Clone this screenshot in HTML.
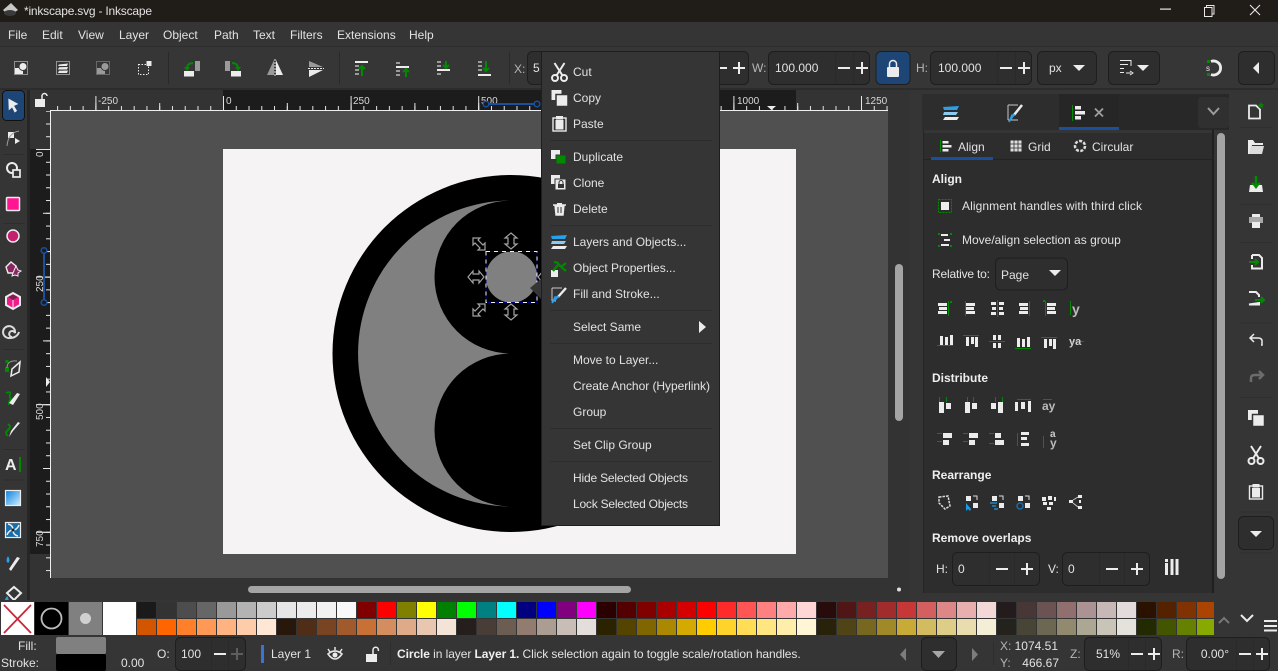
<!DOCTYPE html>
<html><head><meta charset="utf-8"><title>Inkscape</title>
<style>
html,body{margin:0;padding:0;background:#353535;width:1278px;height:671px;overflow:hidden}
svg{display:block}
text{font-family:"Liberation Sans",sans-serif;font-size:12px;fill:#e2e2e2}
.b{font-weight:bold;fill:#efefef}
.m{fill:#dfdfdf}
.r{font-size:10px;fill:#d8d8d8}
.w{fill:#ececec}
.g{fill:#008a00}
.s{stroke:#ececec;fill:none;stroke-width:1.5}
.box{fill:#2e2e2e;stroke:#1e1e1e;stroke-width:1}
.pm{stroke:#ececec;stroke-width:2;fill:none}
.sep{stroke:#2a2a2a;stroke-width:1}
.h{fill:none;stroke:#a0a0a0;stroke-width:1}
</style></head><body>
<svg width="1278" height="671" viewBox="0 0 1278 671" xmlns="http://www.w3.org/2000/svg" shape-rendering="geometricPrecision">
<defs>
<pattern id="tm" patternUnits="userSpaceOnUse" x="223" y="90" width="12.76" height="21"><rect x="0" y="16" width="1" height="4" fill="#e6e6e6"/></pattern>
<pattern id="tm5" patternUnits="userSpaceOnUse" x="223" y="90" width="63.8" height="21"><rect x="0" y="13" width="1" height="7" fill="#e6e6e6"/></pattern>
<pattern id="tM" patternUnits="userSpaceOnUse" x="223" y="90" width="127.6" height="21"><rect x="0" y="6" width="1" height="14" fill="#e6e6e6"/></pattern>
<pattern id="lm" patternUnits="userSpaceOnUse" x="30" y="149" width="21" height="12.76"><rect x="16" y="0" width="4" height="1" fill="#e6e6e6"/></pattern>
<pattern id="lm5" patternUnits="userSpaceOnUse" x="30" y="149" width="21" height="63.8"><rect x="13" y="0" width="7" height="1" fill="#e6e6e6"/></pattern>
<pattern id="lM" patternUnits="userSpaceOnUse" x="30" y="149" width="21" height="127.6"><rect x="6" y="0" width="14" height="1" fill="#e6e6e6"/></pattern>
<linearGradient id="gr" x1="0" y1="0" x2="1" y2="1"><stop offset="0" stop-color="#0a80e0"/><stop offset="1" stop-color="#d2f0ff"/></linearGradient>
<g id="layers"><path d="M-8 -6 L8 -7 L6 -3 L-7 -3Z" fill="#2aa0e8"/><path d="M-7 -1 L7 -1 L5 2 L-8 2Z" fill="#8ccbf0"/><path d="M-6 4 L8 4 L6 7 L-8 7Z" fill="#ececec"/></g>
<g id="cut"><circle cx="-4.5" cy="6" r="3" fill="none" stroke="#ececec" stroke-width="2"/><circle cx="4.5" cy="6" r="3" fill="none" stroke="#ececec" stroke-width="2"/><path d="M-3 3.5 L5 -9 M3 3.5 L-5 -9" stroke="#ececec" stroke-width="2" fill="none"/></g>
<g id="copy"><rect x="-8" y="-8" width="10" height="10" fill="#ececec"/><rect x="-3.5" y="-3.5" width="12" height="12" fill="#ececec" stroke="#353535" stroke-width="1.5"/></g>
<g id="paste"><rect x="-6.5" y="-6" width="13" height="13" fill="none" stroke="#ececec" stroke-width="1.4"/><rect x="-3.5" y="-8" width="7" height="3.5" fill="#ececec"/><rect x="-4" y="-4" width="8" height="9.5" fill="#ececec"/></g>
<g id="arr"><path d="M0 -8 L6 -3 L3 -3 L3 3 L6 3 L0 8 L-6 3 L-3 3 L-3 -3 L-6 -3Z" fill="#000" stroke="#a3a3a3" stroke-width="1.200"/></g>
<g id="darr"><path d="M-6 -6 L1 -6 L-1 -4 L4 1 L6 -1 L6 6 L-1 6 L1 4 L-4 -1 L-6 1Z" fill="#000" stroke="#a3a3a3" stroke-width="1.200"/></g>
</defs>

<!-- base -->
<rect width="1278" height="671" fill="#353535"/>
<!-- title bar -->
<rect width="1278" height="22" fill="#201c18"/>
<path d="M11 3 L18 10 L15 12 L14 11 L12 14 L9 14 L7 11 L5 12 L3 10Z" fill="#c8c8c8"/><ellipse cx="10" cy="13" rx="6" ry="3" fill="#3a3a3a"/>
<text x="24" y="15" style="font-size:12px" textLength="128">*inkscape.svg - Inkscape</text>
<rect x="1160" y="8.5" width="11" height="1.2" fill="#e8e8e8"/>
<path d="M1204.5 7.5h7.5v9h-7.5z M1206.5 7.5v-2h7.5v8.5h-2" fill="none" stroke="#e8e8e8" stroke-width="1"/>
<path d="M1250 5 L1260 15 M1260 5 L1250 15" stroke="#e8e8e8" stroke-width="1.1"/>

<!-- menu bar -->
<rect y="22" width="1278" height="25" fill="#353535"/>
<rect y="46" width="1278" height="1" fill="#2e2e2e"/>
<g style="font-size:12px">
<text x="8" y="39">File</text><text x="42" y="39">Edit</text><text x="78" y="39">View</text><text x="119" y="39">Layer</text><text x="163" y="39">Object</text><text x="214" y="39">Path</text><text x="253" y="39">Text</text><text x="290" y="39">Filters</text><text x="337" y="39">Extensions</text><text x="409" y="39">Help</text>
</g>

<!-- tool bar -->
<rect y="47" width="1278" height="43" fill="#363636"/>
<rect y="88" width="1278" height="2" fill="#2c2c2c"/>
<!-- select all -->
<g transform="translate(21,68)"><rect x="-6.5" y="-6.5" width="13" height="13" fill="none" stroke="#ececec" stroke-dasharray="1 1"/><rect x="-6" y="0" width="8" height="6" class="w"/><circle cx="2" cy="-1.500" r="4" class="w" stroke="#363636"/></g>
<g transform="translate(63,68)"><rect x="-6.5" y="-6.5" width="13" height="13" fill="none" stroke="#ececec" stroke-dasharray="1 1"/><path d="M-4 -3.500 L5 -4.500 L4 -2 L-5 -2Z M-4 -.8 L5 -1 L4 1.500 L-5 1.500Z M-4 2.800 L5 2.500 L4 5 L-5 5Z" class="w"/></g>
<g transform="translate(103,68)" opacity=".55"><rect x="-6.5" y="-6.5" width="13" height="13" fill="none" stroke="#ececec" stroke-dasharray="1 1"/><rect x="-6" y="0" width="8" height="6" class="w"/><circle cx="2" cy="-1.500" r="4" class="w" stroke="#363636"/></g>
<g transform="translate(145,68)"><rect x="-6.500" y="-3.500" width="10" height="10" fill="none" stroke="#ececec" stroke-dasharray="1.500 1.500"/><rect x="1.500" y="-7" width="5" height="5" class="w"/></g>
<!-- rotate -->
<rect x="195" y="61" width="5" height="10" fill="#9a9a9a"/><rect x="184" y="71" width="10" height="5.500" class="w"/><path d="M193 63 Q187 63 187 69" stroke="#008a00" stroke-width="2" fill="none"/><path d="M184 67 L190 67 L187 71Z" class="g"/>
<rect x="225" y="61" width="5" height="10" fill="#9a9a9a"/><rect x="231" y="71" width="10" height="5.500" class="w"/><path d="M232 63 Q238 63 238 69" stroke="#008a00" stroke-width="2" fill="none"/><path d="M235 67 L241 67 L238 71Z" class="g"/>
<!-- flip -->
<path d="M267 75 L274 60 V75Z" fill="#9a9a9a"/><path d="M276 60 L283 75 H276Z" class="w"/><path d="M275 59 V77" stroke="#ececec" stroke-dasharray="2 1"/>
<path d="M309 61 L323 67 H309Z" fill="#9a9a9a"/><path d="M309 70 L323 70 L309 77Z" class="w"/><path d="M308 68.500 H324" stroke="#ececec" stroke-dasharray="2 1"/>
<!-- raise/lower -->
<g transform="translate(355,61)"><rect width="13" height="2" class="w"/><rect y="4" width="4" height="2" fill="#9a9a9a"/><rect y="8" width="4" height="2" fill="#9a9a9a"/><rect y="12" width="4" height="2" fill="#9a9a9a"/><path d="M7 15 V7 M4 8 L7 5 L10 8" stroke="#008a00" stroke-width="2" fill="none"/></g>
<g transform="translate(396,62)"><rect width="4" height="2" fill="#9a9a9a"/><rect y="4" width="13" height="2" class="w"/><rect y="8" width="4" height="2" fill="#9a9a9a"/><rect y="12" width="4" height="2" fill="#9a9a9a"/><path d="M10 15 V9 M7 10 L10 7 L13 10" stroke="#008a00" stroke-width="2" fill="none"/></g>
<g transform="translate(437,61)"><rect width="4" height="2" fill="#9a9a9a"/><rect y="4" width="4" height="2" fill="#9a9a9a"/><rect y="8" width="13" height="2" class="w"/><rect y="12" width="4" height="2" fill="#9a9a9a"/><path d="M9 0 V6 M6 4 L9 7 L12 4" stroke="#008a00" stroke-width="2" fill="none"/></g>
<g transform="translate(478,61)"><rect width="4" height="2" fill="#9a9a9a"/><rect y="4" width="4" height="2" fill="#9a9a9a"/><rect y="8" width="4" height="2" fill="#9a9a9a"/><rect y="13" width="13" height="2" class="w"/><path d="M8 0 V9 M5 7 L8 10 L11 7" stroke="#008a00" stroke-width="2" fill="none"/></g>
<path d="M168.500 52 V84 M339.500 52 V84 M509.500 52 V84" class="sep"/>
<text x="514" y="73" style="fill:#b5b5b5">X:</text>
<rect x="527.500" y="51.500" width="221" height="33" rx="5" class="box"/><text x="533" y="72">5</text>
<path d="M719 68 H727 M733 68 H745 M739 62 V74" class="pm"/>
<text x="752" y="72" style="fill:#b5b5b5">W:</text>
<rect x="768.500" y="51.500" width="101" height="33" rx="5" class="box"/><text x="775" y="72">100.000</text>
<path d="M835.500 52 V84 M853.500 52 V84" class="sep"/><path d="M838 68 H850 M856 68 H868 M862 62 V74" class="pm"/>
<rect x="876" y="51.500" width="34" height="33" rx="5" fill="#1d4575" stroke="#1e1e1e"/>
<rect x="887" y="67" width="12" height="10" rx="1" class="w"/><path d="M889.500 67 V64 a3.500 3.500 0 0 1 7 0 V67" class="s" stroke-width="2"/>
<text x="916" y="72" style="fill:#b5b5b5">H:</text>
<rect x="930.500" y="51.500" width="101" height="33" rx="5" class="box"/><text x="938" y="72">100.000</text>
<path d="M997.500 52 V84 M1015.500 52 V84" class="sep"/><path d="M1000 68 H1012 M1018 68 H1030 M1024 62 V74" class="pm"/>
<rect x="1037.500" y="51.500" width="59" height="33" rx="5" class="box"/><text x="1049" y="72">px</text><path d="M1073 65 H1085 L1079 71Z" class="w"/>
<rect x="1108.500" y="51.500" width="51" height="33" rx="5" class="box"/>
<path d="M1120 60.500 H1131 V66 M1120 64.500 H1128 M1120 68.500 H1124 M1120 72.500 H1124" stroke="#ececec" fill="none"/><path d="M1126 73 H1131 M1130 71 L1133 73 L1130 75" stroke="#ececec" fill="none"/><path d="M1137 65 H1149 L1143 71Z" class="w"/>
<path d="M1211 61.500 a7 7 0 1 1 0 13" fill="none" stroke="#ececec" stroke-width="2.800"/><rect x="1207" y="60" width="3" height="3" class="g"/><rect x="1207" y="73" width="3" height="3" class="g"/><text x="1206" y="71" style="font-size:8px">s</text>
<rect x="1238.500" y="51.500" width="36" height="33" rx="5" class="box"/><path d="M1259 62 V74 L1253 68Z" class="w"/>

<!-- left toolbar -->
<rect x="0" y="90" width="28" height="510" fill="#353535"/>
<rect x="27" y="90" width="3" height="512" fill="#262626"/>
<rect x="2.500" y="90.500" width="22" height="30" rx="4" fill="#1d4575" stroke="#111"/>
<path d="M8 98 L19 104 L14.500 106 L17.500 111 L14.500 113 L12 108 L8.500 111Z" class="w" stroke="#1d4575" stroke-width=".6"/>
<!-- node -->
<rect x="8" y="132" width="6" height="6" fill="#ececec"/><path d="M7 146 Q8 133 19 131" stroke="#9a9a9a" fill="none"/><path d="M15 138 L20 141 L15 144Z" class="w"/>
<!-- shapes -->
<circle cx="12" cy="168" r="5" fill="none" stroke="#ececec" stroke-width="2"/><rect x="13" y="170" width="7" height="7" fill="#353535" stroke="#ececec" stroke-width="1.700"/>
<rect x="6.500" y="197.500" width="13" height="13" rx="1" fill="#ff1493" stroke="#ececec" stroke-width="1.500"/>
<circle cx="13" cy="236" r="6" fill="#c4206f" stroke="#ececec" stroke-width="1.500"/>
<path d="M6 267 L11 262 L16 266 L15 273 L8 273Z" fill="#8a2560" stroke="#ececec" stroke-width="1.400"/><path d="M16 266 L18 270 L21 271 L18 273 L18 276 L15 275 L12 276 L13 273Z" fill="#8a2560" stroke="#ececec"/>
<path d="M13 293 L20 297 V305 L13 309 L6 305 V297Z" fill="#f21b8b" stroke="#ececec" stroke-width="2"/><path d="M8 297 L13 294.500 L18 297 L13 300Z" fill="#7a2050"/><path d="M13 300 V308" stroke="#ececec"/>
<path d="M13 338 a3 3 0 1 1 3 -4 a6 6 0 1 0 -5 5 a9 8 0 0 0 9 -6" fill="none" stroke="#dcdcdc" stroke-width="2" transform="translate(-1,-1)"/>
<!-- pen -->
<rect x="5" y="367" width="4" height="5" class="g"/><rect x="5.500" y="360" width="3" height="3" class="g"/><path d="M7 368 Q7 360 17 361" stroke="#9a9a9a" fill="none"/><path d="M20 362 L19 372 L11 376 L12 369Z" fill="#353535" stroke="#ececec" stroke-width="1.500"/>
<path d="M6 393 q5 -2 4 1 t1 5 q-3 3 -2 6" stroke="#008a00" stroke-width="1.800" fill="none"/><path d="M20 394 L13 405 L9 403 L17 393Z" class="w"/>
<path d="M8 424 q4 3 0 6 t0 6" stroke="#008a00" stroke-width="1.800" fill="none"/><path d="M20 423 L13 431 L9 437 L11 431 L18 422Z" class="w"/>
<text x="5" y="470" style="font-size:16px;font-weight:bold;fill:#ececec">A</text><rect x="19" y="457" width="2" height="15" class="g"/>
<rect x="5.500" y="490.500" width="15" height="15" fill="url(#gr)" stroke="#ececec" stroke-width="1.200"/>
<rect x="5.500" y="522.500" width="15" height="15" fill="#1a6ea8" stroke="#ececec" stroke-width="1.200"/><path d="M13 530 Q13 525 8 524 M13 530 Q17 530 19 525 M13 530 Q13 535 18 536 M13 530 Q9 530 7 535" stroke="#ececec" stroke-width="1.500" fill="none"/><circle cx="13" cy="530" r="1.500" fill="#123"/>
<path d="M8 556 Q11 561 8 563 Q5 561 8 556Z" fill="#2aa0e8"/><path d="M20 558 L13 568 L11 571 L9 569 L17 557Z" class="w"/>
<path d="M14 587 L21 593 L14 600 L7 593Z" fill="#353535" stroke="#ececec" stroke-width="2"/><path d="M7 596 Q9 599 9 602 H4 Q5 599 7 596Z" fill="#2aa0e8"/>
<path d="M3 154.500 H25 M3 223.500 H25 M3 349.500 H25 M3 449.500 H25 M3 480 H25" stroke="#2d2d2d"/>

<!-- rulers -->
<rect x="30" y="90" width="860" height="21" fill="#333"/>
<rect x="30" y="90" width="21" height="488" fill="#333"/>
<rect x="223" y="90" width="573" height="21" fill="#1c1c1c"/>
<rect x="30" y="149" width="21" height="405" fill="#1c1c1c"/>
<rect x="51" y="90" width="837" height="20" fill="url(#tm)"/>
<rect x="51" y="90" width="837" height="20" fill="url(#tm5)"/>
<rect x="51" y="90" width="837" height="20" fill="url(#tM)"/>
<rect x="30" y="111" width="20" height="467" fill="url(#lm)"/>
<rect x="30" y="111" width="20" height="467" fill="url(#lm5)"/>
<rect x="30" y="111" width="20" height="467" fill="url(#lM)"/>
<rect x="50" y="110" width="838" height="1" fill="#f0f0f0"/>
<rect x="50" y="110" width="1" height="468" fill="#f0f0f0"/>
<rect x="30" y="90" width="20" height="20" fill="#333"/>
<text class="r" x="98" y="104">-250</text><text class="r" x="226" y="104">0</text><text class="r" x="353" y="104">250</text><text class="r" x="481" y="104">500</text><text class="r" x="737" y="104">1000</text><text class="r" x="865" y="104">1250</text>
<text class="r" transform="translate(43,157) rotate(-90)">0</text><text class="r" transform="translate(43,292) rotate(-90)">250</text><text class="r" transform="translate(43,420) rotate(-90)">500</text><text class="r" transform="translate(43,547) rotate(-90)">750</text>
<!-- lock ruler -->
<rect x="35" y="99" width="10" height="8" class="w"/><path d="M42 99 V96 a2.500 2.500 0 0 1 5 0" class="s" stroke-width="1.800"/>
<path d="M486 104 H537" stroke="#1a4f9c" stroke-width="2"/><circle cx="486" cy="104" r="2.800" fill="#1c1c1c" stroke="#1a4f9c" stroke-width="1.500"/><circle cx="537" cy="104" r="2.800" fill="#1c1c1c" stroke="#1a4f9c" stroke-width="1.500"/>
<path d="M44 251 V303" stroke="#1a4f9c" stroke-width="2"/><circle cx="44" cy="250.500" r="2.800" fill="#1c1c1c" stroke="#1a4f9c" stroke-width="1.500"/><circle cx="44" cy="302.500" r="2.800" fill="#1c1c1c" stroke="#1a4f9c" stroke-width="1.500"/>
<path d="M767 106 H776 L771.500 110Z" class="w"/><path d="M46 377 V387 L50 382Z" class="w"/>
<!-- monitor -->
<rect x="893.500" y="95.500" width="11" height="8" fill="none" stroke="#ececec" stroke-width="1.200"/><path d="M896 105.500 H902" stroke="#ececec" stroke-width="1.200"/>

<!-- canvas -->
<rect x="51" y="111" width="837" height="467" fill="#505050"/>
<rect x="223" y="149" width="573" height="405" fill="#f5f3f4"/>
<circle cx="511" cy="353.500" r="178.500" fill="#000"/>
<path d="M511 200.500 A153 153 0 0 0 511 506.500Z" fill="#808080"/>
<circle cx="511" cy="277" r="76.500" fill="#000"/>
<circle cx="511" cy="430" r="76.500" fill="#000"/>
<circle cx="511.500" cy="277" r="25.700" fill="#808080"/>
<rect x="486" y="251.500" width="51" height="51" fill="none" stroke="#000080"/>
<rect x="486" y="251.500" width="51" height="51" fill="none" stroke="#f0f0f0" stroke-dasharray="4 4"/>
<use href="#arr" x="511" y="241"/><use href="#arr" x="511" y="312"/>
<use href="#arr" transform="translate(476,277) rotate(90)"/>
<use href="#darr" x="479" y="244"/>
<use href="#darr" transform="translate(479,310) scale(1,-1)"/>
<use href="#arr" transform="translate(546,277) rotate(90)"/>

<!-- canvas gutters -->
<rect x="30" y="578" width="880" height="24" fill="#333"/>
<rect x="888" y="90" width="22" height="512" fill="#333"/>
<rect x="895" y="264" width="8" height="157" rx="4" fill="#a4a4a4"/>
<rect x="248" y="586" width="383" height="7" rx="3.500" fill="#a4a4a4"/>
<circle cx="899" cy="589.500" r="2" fill="#e0e0e0"/>
<circle cx="916" cy="339" r="1.200" fill="#ddd"/><circle cx="916" cy="344" r="1.200" fill="#ddd"/><circle cx="916" cy="349" r="1.200" fill="#ddd"/>

<!-- dock -->
<rect x="910" y="90" width="368" height="512" fill="#353535"/>
<rect x="922" y="94" width="307" height="36" fill="#2d2d2d"/>
<rect x="1059" y="94" width="60" height="33" fill="#262626"/>
<rect x="1119" y="94" width="110" height="36" fill="#282828"/>
<rect x="1198" y="97" width="31" height="31" rx="3" fill="#303030"/>
<rect x="1059" y="127" width="60" height="3" fill="#1a4f9c"/>
<use href="#layers" x="951" y="113"/>
<path d="M1008 105 H1018 M1008 105 V120 M1008 120 H1018" stroke="#ececec" fill="none" opacity=".8"/><path d="M1022 105 L1014 115" stroke="#ececec" stroke-width="2.500"/><path d="M1014 115 L1009 122 L1012 115Z" fill="#2aa0e8" stroke="#2aa0e8" stroke-width="1.500"/>
<rect x="1072" y="105" width="1" height="16" class="g"/><rect x="1075" y="106" width="6" height="3.500" class="w"/><rect x="1075" y="111" width="10" height="3.500" class="w"/><rect x="1075" y="116" width="6" height="3.500" class="w"/>
<path d="M1095 108.500 L1103 116.500 M1103 108.500 L1095 116.500" stroke="#a0a0a0" stroke-width="1.800"/>
<path d="M1208 108 L1213.500 114 L1219 108" stroke="#9c9c9c" stroke-width="2" fill="none"/>

<!-- panel -->
<rect x="923" y="133" width="291" height="460" fill="#2d2d2d"/>
<rect x="923" y="130" width="1" height="463" fill="#252525"/>
<rect x="1212" y="130" width="2" height="463" fill="#202020"/>
<rect x="923" y="159" width="290" height="1" fill="#232323"/>
<rect x="1217" y="133" width="8" height="446" rx="4" fill="#a4a4a4"/>
<rect x="931" y="157" width="62" height="3" fill="#1a4f9c"/>
<rect x="940" y="140" width="1" height="12" class="g"/><rect x="942.500" y="141" width="6" height="2.500" class="w"/><rect x="942.500" y="145" width="9" height="2.500" class="w"/><rect x="942.500" y="149" width="6" height="2.500" class="w"/>
<text x="958" y="151">Align</text>
<rect x="1010.500" y="140.500" width="11" height="11" fill="#ddd"/><path d="M1014 140 V152 M1018 140 V152 M1010 144 H1022 M1010 148 H1022" stroke="#2d2d2d" stroke-width=".8"/>
<text x="1028" y="151">Grid</text>
<circle cx="1080" cy="146" r="5" fill="none" stroke="#ddd" stroke-width="2.500" stroke-dasharray="3 1.500"/>
<text x="1092" y="151">Circular</text>
<text class="b" x="932" y="183">Align</text>
<rect x="938.500" y="199.500" width="13" height="13" fill="none" stroke="#008a00" stroke-dasharray="2 1"/><rect x="941" y="202" width="8" height="8" class="w"/>
<text x="962" y="210" textLength="180">Alignment handles with third click</text>
<rect x="938" y="233" width="2" height="2" class="g"/><rect x="950" y="233" width="2" height="2" class="g"/><rect x="938" y="245" width="2" height="2" class="g"/><rect x="950" y="245" width="2" height="2" class="g"/><rect x="941" y="234" width="7" height="2" class="w"/><rect x="944" y="239" width="6" height="2" class="w"/><rect x="941" y="244" width="8" height="2" class="w"/>
<text x="962" y="244">Move/align selection as group</text>
<text x="932" y="278" textLength="58">Relative to:</text>
<rect x="995.500" y="258" width="72" height="32" rx="5" class="box"/><text x="1001" y="279">Page</text><path d="M1049 270 H1061 L1055 276Z" class="w"/>

<!-- align rows -->
<g class="w">
<rect x="938" y="303" width="9" height="3"/><rect x="939" y="307" width="8" height="3"/><rect x="938" y="311" width="9" height="3"/>
<rect x="966" y="303" width="9" height="3"/><rect x="966" y="307" width="8" height="3"/><rect x="966" y="311" width="9" height="3"/>
<rect x="991" y="302" width="5" height="3"/><rect x="999" y="302" width="5" height="3"/><rect x="992" y="307" width="4" height="3"/><rect x="999" y="307" width="4" height="3"/><rect x="991" y="312" width="5" height="3"/><rect x="999" y="312" width="5" height="3"/>
<rect x="1019" y="303" width="9" height="3"/><rect x="1020" y="307" width="8" height="3"/><rect x="1019" y="311" width="9" height="3"/>
<rect x="1047" y="303" width="9" height="3"/><rect x="1047" y="307" width="8" height="3"/><rect x="1047" y="311" width="9" height="3"/>
<rect x="940" y="336" width="3" height="9"/><rect x="945" y="337" width="3" height="8"/><rect x="950" y="335" width="3" height="10"/>
<rect x="966" y="337" width="3" height="9"/><rect x="971" y="337" width="3" height="7"/><rect x="975" y="337" width="3" height="10"/>
<rect x="993" y="335" width="3" height="5"/><rect x="998" y="335" width="3" height="5"/><rect x="993" y="343" width="3" height="5"/><rect x="998" y="343" width="3" height="5"/>
<rect x="1017" y="338" width="3" height="9"/><rect x="1022" y="339" width="3" height="8"/><rect x="1027" y="337" width="3" height="10"/>
<rect x="1044" y="339" width="3" height="9"/><rect x="1049" y="339" width="3" height="7"/><rect x="1053" y="339" width="3" height="10"/>
</g>
<g class="g">
<rect x="948" y="301" width="1" height="15"/><rect x="965" y="301" width="1" height="15"/><rect x="997" y="300" width="1" height="17"/><rect x="1029" y="301" width="1" height="15"/><rect x="1045" y="301" width="1" height="15"/><rect x="950" y="301" width="2" height="2"/><rect x="1043" y="300" width="2" height="2"/>
<rect x="937" y="345" width="16" height="1"/><rect x="963" y="335" width="16" height="1"/><rect x="989" y="341" width="16" height="1"/><rect x="1015" y="348" width="16" height="1"/><rect x="1041" y="337" width="16" height="1"/>
<rect x="1070" y="341" width="14" height="1"/><rect x="1070" y="301" width="1" height="14"/>
</g>
<text x="1072" y="314" style="font-size:14px;font-weight:bold;fill:#bbb">y</text>
<text x="1069" y="345" style="font-size:11px;font-weight:bold;fill:#d0d0d0">ya</text>

<text class="b" x="932" y="382">Distribute</text>
<!-- distribute rows -->
<g class="g">
<rect x="939" y="397" width="1" height="5"/><rect x="946" y="397" width="1" height="5"/><rect x="967" y="397" width="1" height="5"/><rect x="973" y="397" width="1" height="5"/><rect x="995" y="397" width="1" height="5"/><rect x="1002" y="397" width="1" height="5"/>
<rect x="1017" y="399" width="14" height="1"/><rect x="1043" y="399" width="9" height="1"/>
<rect x="937" y="433" width="5" height="1"/><rect x="937" y="441" width="5" height="1"/><rect x="963" y="433" width="5" height="1"/><rect x="963" y="441" width="5" height="1"/><rect x="989" y="433" width="5" height="1"/><rect x="989" y="443" width="5" height="1"/>
<rect x="1017" y="433" width="1" height="13"/><rect x="1043" y="436" width="1" height="12"/>
</g>
<g class="w">
<rect x="939" y="402" width="5" height="11"/><rect x="946" y="403" width="5" height="6"/><rect x="965" y="402" width="5" height="11"/><rect x="972" y="403" width="5" height="6"/><rect x="991" y="403" width="5" height="6"/><rect x="998" y="402" width="5" height="11"/>
<rect x="1015" y="402" width="3" height="9"/><rect x="1021" y="402" width="4" height="7"/><rect x="1028" y="401" width="3" height="11"/>
<rect x="943" y="433" width="9" height="5"/><rect x="943" y="440" width="6" height="5"/><rect x="969" y="433" width="9" height="5"/><rect x="969" y="440" width="6" height="5"/><rect x="995" y="433" width="6" height="5"/><rect x="995" y="440" width="9" height="5"/>
<rect x="1021" y="432" width="8" height="3"/><rect x="1021" y="437" width="6" height="3"/><rect x="1021" y="443" width="8" height="3"/>
</g>
<text x="1042" y="410" style="font-size:12px;font-weight:bold;fill:#bbb">ay</text>
<text x="1050" y="437" style="font-size:10px;font-weight:bold;fill:#ccc">a</text><text x="1050" y="447" style="font-size:12px;font-weight:bold;fill:#bbb">y</text>

<text class="b" x="932" y="479">Rearrange</text>
<path d="M939 497 L948 496 L950 506 L945 509 L939 503Z" fill="none" stroke="#dcdcdc" stroke-width="1.500" stroke-dasharray="2.500 1"/>
<g class="w">
<rect x="966" y="496" width="5" height="5"/><rect x="973" y="503" width="5" height="5"/>
<rect x="992" y="496" width="5" height="5"/><rect x="999" y="503" width="5" height="5"/>
<rect x="1018" y="496" width="5" height="5"/><rect x="1025" y="503" width="5" height="5"/>
<rect x="1042" y="497" width="4" height="4"/><rect x="1048" y="496" width="4" height="4"/><rect x="1054" y="497" width="2" height="4"/><rect x="1043" y="502" width="4" height="3"/><rect x="1049" y="502" width="4" height="3"/><rect x="1047" y="507" width="4" height="3"/>
<rect x="1069" y="500" width="4" height="3"/><rect x="1078" y="495" width="4" height="3"/><rect x="1078" y="506" width="4" height="3"/><rect x="1079" y="500" width="2" height="3"/>
</g>
<path d="M966 503 V511 L968 509 L970 511 L971 509 Z" fill="#1b9be8"/>
<path d="M990 503 H997 M992 506 H996 M994 509 H998" stroke="#1b9be8" stroke-width="1.200"/>
<circle cx="1020" cy="506" r="3" fill="none" stroke="#1b6ba8" stroke-width="1.500"/>
<path d="M973 496 L977 496 L977 500" stroke="#ddd" fill="none"/><path d="M999 496 L1003 496 L1003 500" stroke="#ddd" fill="none"/><path d="M1025 496 L1029 496 L1029 500" stroke="#ddd" fill="none"/>
<path d="M1073 500 L1078 497 M1073 503 L1078 507" stroke="#ccc" fill="none"/>

<text class="b" x="932" y="542">Remove overlaps</text>
<text x="936" y="573">H:</text>
<rect x="952.500" y="552.500" width="87" height="33" rx="5" class="box"/><text x="958" y="573">0</text>
<path d="M989.500 553 V585 M1014.500 553 V585" class="sep"/><path d="M996 569 H1008 M1021 569 H1033 M1027 563 V575" class="pm"/>
<text x="1048" y="573">V:</text>
<rect x="1062.500" y="552.500" width="87" height="33" rx="5" class="box"/><text x="1068" y="573">0</text>
<path d="M1099.500 553 V585 M1124.500 553 V585" class="sep"/><path d="M1106 569 H1118 M1131 569 H1143 M1137 563 V575" class="pm"/>
<g class="w"><rect x="1165" y="563" width="3" height="12"/><rect x="1165" y="559" width="3" height="3"/><rect x="1170.500" y="559" width="3" height="16"/><rect x="1175.500" y="559" width="3" height="16"/></g>

<!-- right toolbar -->
<path d="M1249 105.500 H1256 L1260 109.500 V118.500 H1249Z" fill="#353535" stroke="#ececec" stroke-width="1.800"/><path d="M1261 102 l1 2.500 2.500 0 -2 1.500 1 2.500 -2.500 -1.500 -2.500 1.500 1 -2.500 -2 -1.500 2.500 0Z" class="g"/>
<path d="M1248 140 H1253 L1255 143 H1263 V145 H1252 L1250 154 H1248Z" class="w"/><path d="M1251 146 H1264 L1262 154 H1249Z" fill="#dcdcdc"/>
<path d="M1256 176 V186 M1252 183 L1256 187 L1260 183" stroke="#008a00" stroke-width="2.500" fill="none"/><path d="M1250 185 L1249 192 H1263 L1262 185 H1259 L1256 189 L1253 185Z" class="w"/>
<rect x="1252" y="214" width="8" height="3" class="w"/><rect x="1249" y="217" width="14" height="6" fill="#a8a8a8"/><rect x="1252" y="222" width="8" height="6" class="w"/>
<path d="M1252 255 H1259 L1262 258 V268.500 H1252 V265 M1252 259 V255" fill="none" stroke="#ececec" stroke-width="2"/><path d="M1249 262 H1258 M1255 259 L1258 262 L1255 265" stroke="#008a00" stroke-width="2" fill="none"/>
<path d="M1249 292 H1256 L1259 295 V297 M1259 303 V304.500 H1249Z" fill="none" stroke="#ececec" stroke-width="2"/><path d="M1255 300 H1264 M1261 297 L1264 300 L1261 303" stroke="#008a00" stroke-width="2" fill="none"/>
<path d="M1261 345 H1262 V341 Q1262 338 1258 338 H1251 M1254 334 L1250 338 L1254 342" class="s" stroke-width="2.500"/>
<path d="M1251 382 V378 Q1251 375 1255 375 H1263 M1259 371 L1263 375 L1259 379" fill="none" stroke="#6c6c6c" stroke-width="2.500"/>
<use href="#copy" x="1256" y="418"/>
<use href="#cut" x="1256" y="455"/>
<use href="#paste" x="1256" y="492"/>
<rect x="1238.500" y="516.500" width="35" height="33" rx="5" class="box"/><path d="M1250 531 H1262 L1256 537Z" class="w"/>
<path d="M1240 127.500 H1272 M1240 204.500 H1272 M1240 242.500 H1272 M1240 323 H1272 M1240 397.500 H1272 M1240 512 H1272 M1240 553 H1272" stroke="#2f2f2f"/>

<!-- palette -->
<rect y="600" width="1278" height="36" fill="#353535"/>
<rect x="1" y="602" width="33" height="33" fill="#fff"/><path d="M4 605 L31 633 M31 605 L4 633" stroke="#c8283c" stroke-width="1.800"/>
<rect x="35" y="602" width="33" height="33" fill="#000"/><circle cx="51.500" cy="618.500" r="10" fill="none" stroke="#bbb" stroke-width="1.800"/>
<rect x="69" y="602" width="33" height="33" fill="#808080"/><circle cx="85.500" cy="618.500" r="5.500" fill="#d0d0d0"/>
<rect x="103" y="602" width="33" height="33" fill="#fff"/>
<g id="row1">
<rect x="137" y="602" width="19" height="16" fill="#1a1a1a"/><rect x="157" y="602" width="19" height="16" fill="#333"/><rect x="177" y="602" width="19" height="16" fill="#4d4d4d"/><rect x="197" y="602" width="19" height="16" fill="#666"/><rect x="217" y="602" width="19" height="16" fill="#999"/><rect x="237" y="602" width="19" height="16" fill="#b3b3b3"/><rect x="257" y="602" width="19" height="16" fill="#ccc"/><rect x="277" y="602" width="19" height="16" fill="#e6e6e6"/><rect x="297" y="602" width="19" height="16" fill="#ececec"/><rect x="317" y="602" width="19" height="16" fill="#f2f2f2"/><rect x="337" y="602" width="19" height="16" fill="#f9f9f9"/>
<rect x="357" y="602" width="19" height="16" fill="#800000"/><rect x="377" y="602" width="19" height="16" fill="#f00"/><rect x="397" y="602" width="19" height="16" fill="#808000"/><rect x="417" y="602" width="19" height="16" fill="#ff0"/><rect x="437" y="602" width="19" height="16" fill="#008000"/><rect x="457" y="602" width="19" height="16" fill="#0f0"/><rect x="477" y="602" width="19" height="16" fill="#008080"/><rect x="497" y="602" width="19" height="16" fill="#0ff"/><rect x="517" y="602" width="19" height="16" fill="#000080"/><rect x="537" y="602" width="19" height="16" fill="#00f"/><rect x="557" y="602" width="19" height="16" fill="#800080"/><rect x="577" y="602" width="19" height="16" fill="#f0f"/>
<rect x="597" y="602" width="19" height="16" fill="#2b0000"/><rect x="617" y="602" width="19" height="16" fill="#500"/><rect x="637" y="602" width="19" height="16" fill="#800000"/><rect x="657" y="602" width="19" height="16" fill="#a00"/><rect x="677" y="602" width="19" height="16" fill="#d40000"/><rect x="697" y="602" width="19" height="16" fill="#f00"/><rect x="717" y="602" width="19" height="16" fill="#ff2a2a"/><rect x="737" y="602" width="19" height="16" fill="#f55"/><rect x="757" y="602" width="19" height="16" fill="#ff8080"/><rect x="777" y="602" width="19" height="16" fill="#faa"/><rect x="797" y="602" width="19" height="16" fill="#ffd5d5"/>
<rect x="817" y="602" width="19" height="16" fill="#280b0b"/><rect x="837" y="602" width="19" height="16" fill="#501616"/><rect x="857" y="602" width="19" height="16" fill="#782121"/><rect x="877" y="602" width="19" height="16" fill="#a02c2c"/><rect x="897" y="602" width="19" height="16" fill="#c83737"/><rect x="917" y="602" width="19" height="16" fill="#d35f5f"/><rect x="937" y="602" width="19" height="16" fill="#de8787"/><rect x="957" y="602" width="19" height="16" fill="#e9afaf"/><rect x="977" y="602" width="19" height="16" fill="#f4d7d7"/>
<rect x="997" y="602" width="19" height="16" fill="#241c1c"/><rect x="1017" y="602" width="19" height="16" fill="#483737"/><rect x="1037" y="602" width="19" height="16" fill="#6c5353"/><rect x="1057" y="602" width="19" height="16" fill="#916f6f"/><rect x="1077" y="602" width="19" height="16" fill="#ac9393"/><rect x="1097" y="602" width="19" height="16" fill="#c8b7b7"/><rect x="1117" y="602" width="19" height="16" fill="#e3dbdb"/>
<rect x="1137" y="602" width="19" height="16" fill="#2b1100"/><rect x="1157" y="602" width="19" height="16" fill="#520"/><rect x="1177" y="602" width="19" height="16" fill="#803300"/><rect x="1197" y="602" width="17" height="16" fill="#a40"/>
</g>
<g id="row2">
<rect x="137" y="619" width="19" height="16" fill="#d45500"/><rect x="157" y="619" width="19" height="16" fill="#f60"/><rect x="177" y="619" width="19" height="16" fill="#ff7f2a"/><rect x="197" y="619" width="19" height="16" fill="#f95"/><rect x="217" y="619" width="19" height="16" fill="#ffb380"/><rect x="237" y="619" width="19" height="16" fill="#fca"/><rect x="257" y="619" width="19" height="16" fill="#ffe6d5"/>
<rect x="277" y="619" width="19" height="16" fill="#28170b"/><rect x="297" y="619" width="19" height="16" fill="#502d16"/><rect x="317" y="619" width="19" height="16" fill="#784421"/><rect x="337" y="619" width="19" height="16" fill="#a05a2c"/><rect x="357" y="619" width="19" height="16" fill="#c87137"/><rect x="377" y="619" width="19" height="16" fill="#d38d5f"/><rect x="397" y="619" width="19" height="16" fill="#deaa87"/><rect x="417" y="619" width="19" height="16" fill="#e9c6af"/><rect x="437" y="619" width="19" height="16" fill="#f4e3d7"/>
<rect x="457" y="619" width="19" height="16" fill="#241f1c"/><rect x="477" y="619" width="19" height="16" fill="#483e37"/><rect x="497" y="619" width="19" height="16" fill="#6c5d53"/><rect x="517" y="619" width="19" height="16" fill="#917c6f"/><rect x="537" y="619" width="19" height="16" fill="#ac9d93"/><rect x="557" y="619" width="19" height="16" fill="#c8beb7"/><rect x="577" y="619" width="19" height="16" fill="#e3dedb"/>
<rect x="597" y="619" width="19" height="16" fill="#2b2200"/><rect x="617" y="619" width="19" height="16" fill="#540"/><rect x="637" y="619" width="19" height="16" fill="#806600"/><rect x="657" y="619" width="19" height="16" fill="#a80"/><rect x="677" y="619" width="19" height="16" fill="#d4aa00"/><rect x="697" y="619" width="19" height="16" fill="#fc0"/><rect x="717" y="619" width="19" height="16" fill="#ffd42a"/><rect x="737" y="619" width="19" height="16" fill="#fd5"/><rect x="757" y="619" width="19" height="16" fill="#ffe680"/><rect x="777" y="619" width="19" height="16" fill="#fea"/><rect x="797" y="619" width="19" height="16" fill="#fff6d5"/>
<rect x="817" y="619" width="19" height="16" fill="#28220b"/><rect x="837" y="619" width="19" height="16" fill="#504416"/><rect x="857" y="619" width="19" height="16" fill="#786721"/><rect x="877" y="619" width="19" height="16" fill="#a08928"/><rect x="897" y="619" width="19" height="16" fill="#c8ab37"/><rect x="917" y="619" width="19" height="16" fill="#d3bc5f"/><rect x="937" y="619" width="19" height="16" fill="#decd87"/><rect x="957" y="619" width="19" height="16" fill="#e9ddaf"/><rect x="977" y="619" width="19" height="16" fill="#f4eed7"/>
<rect x="997" y="619" width="19" height="16" fill="#24221c"/><rect x="1017" y="619" width="19" height="16" fill="#484537"/><rect x="1037" y="619" width="19" height="16" fill="#6c6753"/><rect x="1057" y="619" width="19" height="16" fill="#918a6f"/><rect x="1077" y="619" width="19" height="16" fill="#aca793"/><rect x="1097" y="619" width="19" height="16" fill="#c8c4b7"/><rect x="1117" y="619" width="19" height="16" fill="#e3e2db"/>
<rect x="1137" y="619" width="19" height="16" fill="#222b00"/><rect x="1157" y="619" width="19" height="16" fill="#450"/><rect x="1177" y="619" width="19" height="16" fill="#668000"/><rect x="1197" y="619" width="17" height="16" fill="#8a0"/>
</g>
<path d="M1219 623 L1224 618 L1229 623" fill="none" stroke="#777" stroke-width="2"/>
<path d="M1241 615 L1247 621 L1253 615" fill="none" stroke="#ececec" stroke-width="2"/>
<path d="M1264 621 H1277 M1264 626 H1277 M1264 630.500 H1277" stroke="#ececec" stroke-width="2"/>

<!-- status bar -->
<text x="18" y="650">Fill:</text><text x="1" y="667">Stroke:</text>
<rect x="56" y="637" width="50" height="17" rx="2" fill="#808080"/><rect x="56" y="654" width="50" height="17" rx="2" fill="#000"/>
<text x="121" y="667">0.00</text>
<text x="157" y="658">O:</text>
<rect x="175.500" y="637.500" width="70" height="33" rx="5" class="box"/><text x="181" y="658">100</text>
<path d="M211.500 638 V670 M228.500 638 V670" class="sep"/><path d="M214 654 H226" class="pm"/><path d="M231 654 H243 M237 648 V660" stroke="#5e5e5e" stroke-width="2" fill="none"/>
<rect x="261" y="645" width="3" height="18" fill="#3c73d0"/>
<text x="271" y="658">Layer 1</text>
<g transform="translate(0,4)"><path d="M328 650 Q335 644 342 650 Q335 660 328 650Z" fill="none" stroke="#e4e4e4" stroke-width="1.600"/><circle cx="335" cy="651" r="2.500" class="w"/><path d="M328 645 L330 648 M342 645 L340 648 M335 643 V646" stroke="#e4e4e4" stroke-width="1.500"/></g>
<rect x="366" y="654" width="11" height="8" class="w"/><path d="M373 654 V650 a2.700 2.700 0 0 1 5.400 0 V651" class="s" stroke-width="1.800"/>
<path d="M390.500 642 V665" stroke="#2d2d2d"/>
<text x="397" y="658" style="letter-spacing:-.075px"><tspan class="b">Circle</tspan> in layer <tspan class="b">Layer 1.</tspan> Click selection again to toggle scale/rotation handles.</text>
<path d="M906 648 V661 L900 654.500Z" fill="#7d7d7d"/>
<rect x="921.500" y="637.500" width="35" height="33" rx="5" class="box"/><path d="M932 651 H945 L938.500 658Z" fill="#a6a6a6"/>
<path d="M972 648 V661 L978 654.500Z" fill="#7d7d7d"/>
<path d="M993.500 642 V665" stroke="#2d2d2d"/>
<text x="1000" y="650" style="fill:#b5b5b5">X:</text><text x="1000" y="667" style="fill:#b5b5b5">Y:</text>
<text x="1058" y="650" text-anchor="end">1074.51</text><text x="1059" y="667" text-anchor="end">466.67</text>
<text x="1070" y="658" style="fill:#b5b5b5">Z:</text>
<rect x="1084.500" y="637.500" width="77" height="33" rx="5" class="box"/><text x="1120" y="658" text-anchor="end">51%</text>
<path d="M1128.500 638 V670 M1145.500 638 V670" class="sep"/><path d="M1131 654 H1143 M1148 654 H1160 M1154 648 V660" class="pm"/>
<text x="1172" y="658" style="fill:#b5b5b5">R:</text>
<rect x="1186.500" y="637.500" width="83" height="33" rx="5" class="box"/><text x="1229" y="658" text-anchor="end">0.00°</text>
<path d="M1236.500 638 V670 M1253.500 638 V670" class="sep"/><path d="M1239 654 H1251 M1256 654 H1268 M1262 648 V660" class="pm"/>

<!-- context menu -->
<path d="M542 278 L530 288 L542 300Z" fill="#353535"/>
<rect x="541.500" y="51.500" width="178" height="474" fill="#353535" stroke="#1e1e1e"/>
<path d="M550 140.500 H712 M550 225.500 H712 M550 310.500 H712 M550 343.500 H712 M550 428.500 H712 M550 461.500 H712" stroke="#2d2d2d"/>
<use href="#cut" x="559.500" y="72"/>
<use href="#copy" x="559.500" y="98"/>
<use href="#paste" x="559.500" y="124"/>
<rect x="551" y="150" width="9" height="9" class="w"/><rect x="556" y="155" width="10" height="9" fill="#008a00" stroke="#353535"/>
<rect x="551" y="175" width="9" height="9" class="w"/><rect x="555" y="179" width="11" height="11" fill="#ececec" stroke="#353535"/><rect x="558" y="184" width="6" height="4" fill="#353535"/><path d="M559 184 v-1.500 a2 2 0 0 1 4 0 V184" fill="none" stroke="#353535"/>
<path d="M553 205 H566 M555 205 L556 215 H563 L564 205" stroke="#ececec" stroke-width="1.400" fill="#ececec"/><rect x="557" y="203" width="5" height="2" class="w"/><path d="M558 207 V213 M561 207 V213" stroke="#353535"/>
<use href="#layers" x="559" y="242"/>
<rect x="551" y="270" width="7" height="7" class="w"/><path d="M554 262 Q558 262 559 265 L566 271 M553 271 L558 265 M566 263 L561 267" stroke="#008a00" stroke-width="2.200" fill="none"/>
<path d="M552 288 H562 M552 288 V301 M552 301 H556" stroke="#ececec" fill="none" opacity=".8"/><path d="M566 288 L558 297" stroke="#ececec" stroke-width="2.400"/><path d="M558 297 L552 303 L555 297Z" fill="#2aa0e8" stroke="#2aa0e8" stroke-width="1.500"/>
<g class="m">
<text x="573" y="76">Cut</text><text x="573" y="102">Copy</text><text x="573" y="128">Paste</text>
<text x="573" y="161">Duplicate</text><text x="573" y="187">Clone</text><text x="573" y="213">Delete</text>
<text x="573" y="246">Layers and Objects...</text><text x="573" y="272">Object Properties...</text><text x="573" y="298">Fill and Stroke...</text>
<text x="573" y="331">Select Same</text>
<text x="573" y="364">Move to Layer...</text><text x="573" y="390" textLength="137">Create Anchor (Hyperlink)</text><text x="573" y="416">Group</text>
<text x="573" y="449">Set Clip Group</text>
<text x="573" y="482" textLength="115">Hide Selected Objects</text><text x="573" y="508" textLength="115">Lock Selected Objects</text>
</g>
<path d="M699 321 V333 L706 327Z" class="w"/>
</svg>
</body></html>
